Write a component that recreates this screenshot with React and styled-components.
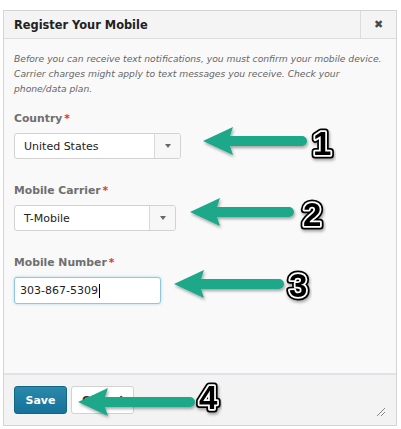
import React from "react";
import styled, { createGlobalStyle } from "styled-components";

const GlobalStyle = createGlobalStyle`
  html, body { margin: 0; padding: 0; background: #ffffff; }
  body { font-family: "DejaVu Sans", Verdana, sans-serif; }
`;

const Page = styled.div`
  position: relative;
  width: 401px;
  height: 429px;
  padding: 10px 4px 3px 3px;
  box-sizing: border-box;
`;

const Dialog = styled.div`
  height: 100%;
  display: flex;
  flex-direction: column;
  border: 1px solid #d4d4d4;
  box-sizing: border-box;
  background: #f9f9f9;
`;

const Header = styled.div`
  display: flex;
  height: 27px;
  flex: none;
  background: #f4f4f4;
  border-bottom: 1px solid #dcdcdc;
`;

const Title = styled.div`
  flex: 1;
  display: flex;
  align-items: center;
  padding-left: 10px;
  font-size: 11.4px;
  font-weight: bold;
  color: #222;
`;

const CloseBtn = styled.div`
  width: 35px;
  display: flex;
  align-items: center;
  justify-content: center;
  border-left: 1px solid #dcdcdc;
  color: #4a4a4a;
  font-size: 11px;
`;

const Body = styled.div`
  flex: 1;
  padding: 12px 10px 0 10px;
  display: flex;
  flex-direction: column;
  border-bottom: 2px solid #e3e1e8;
`;

const Desc = styled.p`
  margin: 0 0 15px 0;
  font-size: 9.2px;
  line-height: 15px;
  font-style: italic;
  color: #666;
`;

const Field = styled.div`
  display: flex;
  flex-direction: column;
  align-items: flex-start;
  margin-bottom: 24px;
`;

const Label = styled.label`
  font-size: 10.8px;
  line-height: 15px;
  font-weight: bold;
  color: #6f6f6f;
  margin-bottom: 7px;
  &::after {
    content: "*";
    color: #e8312f;
    margin-left: 2px;
  }
`;

const Select = styled.div`
  display: flex;
  width: ${(p) => p.$w}px;
  height: 26px;
  box-sizing: border-box;
  border: 1px solid #d2d2d2;
  border-radius: 3px;
  background: #fff;
  overflow: hidden;
`;

const SelectValue = styled.div`
  flex: 1;
  display: flex;
  align-items: center;
  padding-left: ${(p) => p.$pad}px;
  font-size: 11px;
  color: #222;
`;

const SelectToggle = styled.div`
  width: 25px;
  display: flex;
  align-items: center;
  justify-content: center;
  border-left: 1px solid #d8d8d8;
  background: #f7f7f7;
  &::after {
    content: "";
    border-left: 3.5px solid transparent;
    border-right: 3.5px solid transparent;
    border-top: 4px solid #666;
  }
`;

const TextInput = styled.div`
  display: flex;
  align-items: center;
  width: 147px;
  height: 27px;
  box-sizing: border-box;
  padding-left: 5px;
  border: 1px solid #8fc7e0;
  border-radius: 3px;
  background: #fff;
  box-shadow: 0 0 3px rgba(80, 170, 210, 0.45);
  font-size: 11px;
  color: #222;
`;

const Caret = styled.span`
  display: inline-block;
  width: 1px;
  height: 14px;
  background: #000;
  margin-left: 1px;
`;

const Footer = styled.div`
  position: relative;
  height: 50px;
  flex: none;
  background: #f3f3f3;
  display: flex;
  align-items: center;
  gap: 4px;
  padding: 0 10px;
`;

const Button = styled.div`
  height: 28px;
  box-sizing: border-box;
  display: flex;
  align-items: center;
  justify-content: center;
  border-radius: 3px;
  font-size: 11px;
  font-weight: bold;
  width: ${(p) => (p.$primary ? 53 : 63)}px;
  color: ${(p) => (p.$primary ? "#fff" : "#333")};
  background: ${(p) =>
    p.$primary ? "linear-gradient(#2a89ab, #15729a)" : "#ffffff"};
  border: 1px solid ${(p) => (p.$primary ? "#126585" : "#d2d2d2")};
`;

const Grip = styled.svg`
  position: absolute;
  right: 10px;
  bottom: 8px;
`;

const Overlay = styled.svg`
  position: absolute;
  left: 0;
  top: 0;
  pointer-events: none;
`;

function Arrow({ x, y, len }) {
  return (
    <g transform={`translate(${x} ${y})`} filter="url(#shadow)">
      <path
        d={`M0 0 L30 -14 L27 -5 L${len} -5 A5 5 0 0 1 ${len} 5 L27 5 L30 14 Z`}
        fill="#1ba889"
        strokeLinejoin="round"
      />
    </g>
  );
}

function Num({ x, y, children }) {
  const common = {
    x,
    y,
    fontFamily: "'Liberation Sans', Arial, sans-serif",
    fontWeight: "bold",
    fontSize: 33,
  };
  return (
    <g filter="url(#shadow)">
      <text {...common} stroke="#000" strokeWidth="7" strokeLinejoin="round" fill="#000">{children}</text>
      <text {...common} stroke="#fff" strokeWidth="3.5" strokeLinejoin="round" fill="#000">{children}</text>
      <text {...common} fill="#000">{children}</text>
    </g>
  );
}

export default function App() {
  return (
    <>
      <GlobalStyle />
      <Page>
        <Dialog>
          <Header>
            <Title>Register Your Mobile</Title>
            <CloseBtn>✖</CloseBtn>
          </Header>
          <Body>
            <Desc>
              Before you can receive text notifications, you must confirm your mobile device.
              Carrier charges might apply to text messages you receive. Check your
              phone/data plan.
            </Desc>
            <Field>
              <Label>Country</Label>
              <Select $w={167}>
                <SelectValue $pad={9}>United States</SelectValue>
                <SelectToggle />
              </Select>
            </Field>
            <Field>
              <Label>Mobile Carrier</Label>
              <Select $w={162}>
                <SelectValue $pad={9}>T-Mobile</SelectValue>
                <SelectToggle />
              </Select>
            </Field>
            <Field>
              <Label>Mobile Number</Label>
              <TextInput>
                303-867-5309<Caret />
              </TextInput>
            </Field>
          </Body>
          <Footer>
            <Button $primary>Save</Button>
            <Button>Cancel</Button>
            <Grip width="10" height="10" viewBox="0 0 10 10">
              <path d="M1 9 L9 1 M5 9 L9 5" stroke="#888" strokeWidth="1" />
            </Grip>
          </Footer>
        </Dialog>
        <Overlay width="401" height="429" viewBox="0 0 401 429">
          <defs>
            <filter id="shadow" x="-20%" y="-40%" width="140%" height="180%">
              <feDropShadow dx="1" dy="2" stdDeviation="1.5" floodColor="#000" floodOpacity="0.35" />
            </filter>
          </defs>
          <Arrow x={203} y={141} len={99} />
          <Num x={313} y={155}>1</Num>
          <Arrow x={190} y={212} len={99} />
          <Num x={303} y={226}>2</Num>
          <Arrow x={174} y={284} len={105} />
          <Num x={289} y={297}>3</Num>
          <Arrow x={78} y={402} len={112} />
          <Num x={199} y={409}>4</Num>
        </Overlay>
      </Page>
    </>
  );
}
